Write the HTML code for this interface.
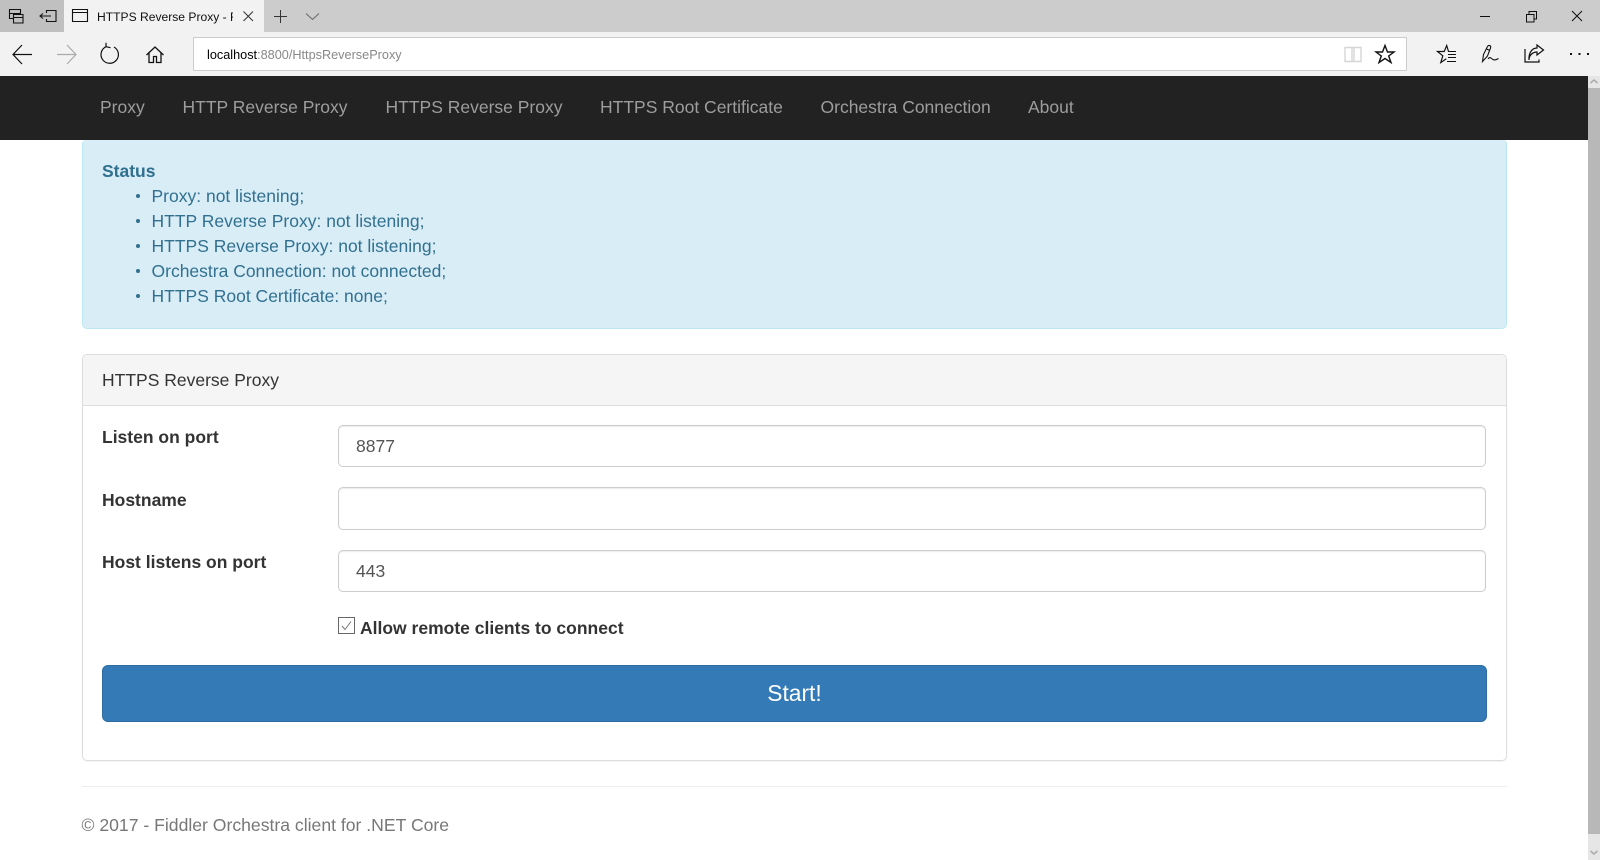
<!DOCTYPE html>
<html><head><meta charset="utf-8"><title>HTTPS Reverse Proxy</title>
<style>
html,body{margin:0;padding:0;width:1600px;height:860px;overflow:hidden;background:#fff;font-family:"Liberation Sans",sans-serif}
.a{position:absolute;white-space:nowrap}
.t{font-size:17.5px;line-height:25px;filter:blur(.25px)}
.b{position:absolute;width:4px;height:4px;left:136px;border-radius:50%;background:#31708f}
svg{position:absolute;left:0;top:0}
</style></head><body>
<div class="a" style="left:0;top:0;width:1600px;height:32px;background:#ccc"></div>
<div class="a" style="left:0;top:0;width:64px;height:32px;background:#c0c0c0"></div>
<div class="a" style="left:64px;top:0;width:200px;height:32px;background:#f2f2f2"></div>
<div class="a" style="left:0;top:32px;width:1600px;height:44px;background:#f2f2f2"></div>
<div class="a" style="left:193px;top:37px;width:1212px;height:32px;background:#fff;border:1px solid #ccc"></div>
<div class="a" style="left:97px;top:8.500px;width:136px;overflow:hidden;font-size:12.1px;line-height:17px;color:#111">HTTPS Reverse Proxy - Fiddler</div>
<div class="a" style="left:207px;top:47px;font-size:12.7px;line-height:17px;color:#888"><span style="color:#000">localhost</span>:8800/HttpsReverseProxy</div>
<svg width="1600" height="76" fill="none" stroke="#111" stroke-width="1">
<path d="M9.500 9.500h11v4h-11zM9.500 13.500v5h3.500M13.500 14.500h9.500v8.500h-9.500zM13.500 17.500h9.500" stroke-width="1.1"/>
<path d="M46.500 13v-2.500h9.500v11h-9.500v-2.500M40 16h11M43 13.500l-3 2.500l3 2.500" stroke-width="1.1"/>
<path d="M72.500 9.500h15v12h-15zM72.500 12.500h15" stroke-width="1.1"/>
<path d="M243.500 11.500l9.500 9.500M253 11.500l-9.500 9.500" stroke="#333"/>
<path d="M274 16.500h13M280.500 10v13" stroke="#333"/>
<path d="M306 13.500l6.500 6l6.500-6" stroke="#666"/>
<path d="M13 54.500h19M22 45l-9 9.500l9 9.500" stroke-width="1.2"/>
<path d="M57 54.500h19M67 45l9 9.500l-9 9.500" stroke="#aaa" stroke-width="1.2"/>
<path d="M106 46.700a8.700 8.700 0 1 0 8 .3M106 46.700l0-4M106 46.700l4.500 1" stroke-width="1.2"/>
<path d="M146.500 55l8.500-8l8.500 8M149 53v9.500h4.500v-6h3v6h4.500v-9.500" stroke-width="1.3"/>
<path d="M1345 47.500h16v14h-16zM1352 47.500v14M1354 47.500v14" stroke="#d6d6d6" stroke-width="1.4"/>
<path d="M1385 45.500l2.500 6.500h6.500l-5.300 4l2.300 6.500l-6-4l-6 4l2.300-6.500l-5.300-4h6.500z" stroke-width="1.4"/>
<path d="M1448.500 51.500l-1.800-6l-2.500 6h-6.700l5.300 4.300l-2 6.800l5.500-3.800" stroke-width="1.2"/>
<path d="M1448 51.500h8M1448 54.500h8M1448 57.500h8M1447 61.500h9" stroke-width="1.1"/>
<path d="M1482.500 61.500l1-7l4-8c1-2 4-1 3 1.500l-3 8l-5 5.500zM1486.500 49l3.500 1.500M1488 59c2-3 3-.5 5 .5c1.500 1 3 .5 5.500-1" stroke-width="1.1"/>
<path d="M1525 49v13h14v-2.500M1529 60c0-5 4-8 8-8v3l6.500-5l-6.500-5v3c-5 0-8.500 5-8 12z" stroke-width="1.2"/>
<path d="M1570 54h2M1578.500 54h2M1587 54h2" stroke-width="2"/>
<path d="M1480 16.500h10"/>
<path d="M1526.500 14.500h7.500v7.500h-7.500zM1529 14v-2.500h7.500v7.500h-2.500" stroke-width="1"/>
<path d="M1572 11l10 10M1582 11l-10 10"/>
</svg>
<div class="a" style="left:0;top:76px;width:1588px;height:64px;background:#222"></div>
<div class="a t" style="left:100px;top:95px;color:#9d9d9d">Proxy</div>
<div class="a t" style="left:182.500px;top:95px;color:#9d9d9d">HTTP Reverse Proxy</div>
<div class="a t" style="left:385.500px;top:95px;color:#9d9d9d">HTTPS Reverse Proxy</div>
<div class="a t" style="left:600px;top:95px;color:#9d9d9d">HTTPS Root Certificate</div>
<div class="a t" style="left:820.500px;top:95px;color:#9d9d9d">Orchestra Connection</div>
<div class="a t" style="left:1028px;top:95px;color:#9d9d9d">About</div>
<div class="a" style="left:1588px;top:76px;width:12px;height:784px;background:#e6e6e6"></div>
<div class="a" style="left:1588px;top:88px;width:12px;height:746px;background:#b8b8b8"></div>
<svg width="1600" height="860" fill="none"><path d="M1590.500 83l3.500-3l3.500 3" stroke="#aaa" stroke-width="1.500"/><path d="M1590.500 851l3.500 3l3.500-3" stroke="#aaa" stroke-width="1.500"/></svg>
<div class="a" style="left:82px;top:140px;width:1423px;height:188px;background:#d9edf7;border:1px solid #bce8f1;border-top:0;border-radius:4px 4px 5px 5px"></div>
<div class="a t" style="left:102px;top:159px;color:#31708f;font-weight:bold">Status</div>
<div class="b" style="top:194px"></div>
<div class="b" style="top:219px"></div>
<div class="b" style="top:244px"></div>
<div class="b" style="top:269px"></div>
<div class="b" style="top:294px"></div>
<div class="a t" style="left:151.500px;top:184px;color:#31708f">Proxy: not listening;</div>
<div class="a t" style="left:151.500px;top:209px;color:#31708f">HTTP Reverse Proxy: not listening;</div>
<div class="a t" style="left:151.500px;top:234px;color:#31708f">HTTPS Reverse Proxy: not listening;</div>
<div class="a t" style="left:151.500px;top:259px;color:#31708f">Orchestra Connection: not connected;</div>
<div class="a t" style="left:151.500px;top:284px;color:#31708f">HTTPS Root Certificate: none;</div>
<div class="a" style="left:82px;top:354px;width:1423px;height:405px;border:1px solid #ddd;border-radius:5px;box-shadow:0 1px 1px rgba(0,0,0,.05)"></div>
<div class="a" style="left:83px;top:355px;width:1423px;height:50px;background:#f5f5f5;border-bottom:1px solid #ddd;border-radius:4px 4px 0 0"></div>
<div class="a t" style="left:102px;top:368px;color:#333">HTTPS Reverse Proxy</div>
<div class="a t" style="left:102px;top:425px;color:#333;font-weight:bold">Listen on port</div>
<div class="a t" style="left:102px;top:488px;color:#333;font-weight:bold">Hostname</div>
<div class="a t" style="left:102px;top:550px;color:#333;font-weight:bold">Host listens on port</div>
<div class="a t" style="left:338px;top:425px;width:1146px;height:40px;line-height:40px;border:1px solid #ccc;border-radius:5px;box-shadow:inset 0 1px 1px rgba(0,0,0,.075);color:#555;text-indent:17px">8877</div>
<div class="a" style="left:338px;top:487px;width:1146px;height:41px;border:1px solid #ccc;border-radius:5px;box-shadow:inset 0 1px 1px rgba(0,0,0,.075)"></div>
<div class="a t" style="left:338px;top:550px;width:1146px;height:40px;line-height:40px;border:1px solid #ccc;border-radius:5px;box-shadow:inset 0 1px 1px rgba(0,0,0,.075);color:#555;text-indent:17px">443</div>
<svg width="1600" height="860" fill="none"><path d="M338.500 617.500h16v16h-16z" stroke="#666"/><path d="M342 626l3 3.500l6-8" stroke="#777"/></svg>
<div class="a t" style="left:360px;top:616px;color:#333;font-weight:bold">Allow remote clients to connect</div>
<div class="a" style="left:102px;top:665px;width:1383px;height:55px;line-height:55px;background:#337ab7;border:1px solid #2e6da4;border-radius:6px;color:#fff;font-size:22.800px;text-align:center">Start!</div>
<div class="a" style="left:82px;top:786px;width:1425px;height:1px;background:#eee"></div>
<div class="a t" style="left:81.500px;top:813px;color:#777;font-size:17.6px">© 2017 - Fiddler Orchestra client for .NET Core</div>
</body></html>
